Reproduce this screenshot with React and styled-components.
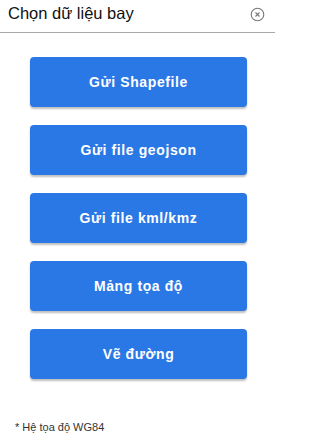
import React from 'react';
import styled, { createGlobalStyle } from 'styled-components';

const GlobalStyle = createGlobalStyle`
  html, body {
    margin: 0;
    padding: 0;
    background: #fff;
  }
  body {
    font-family: 'Liberation Sans', Arial, sans-serif;
  }
`;

const Panel = styled.div`
  width: 275px;
  height: 440px;
  display: flex;
  flex-direction: column;
  background: #fff;
  box-sizing: border-box;
`;

const Header = styled.header`
  height: 33px;
  display: flex;
  align-items: center;
  justify-content: space-between;
  padding: 0 10px 0 8px;
  border-bottom: 1px solid #a9a9a9;
  box-sizing: border-box;
`;

const Title = styled.h1`
  margin: -6px 0 0 0;
  font-size: 16.5px;
  font-weight: 400;
  color: #111;
`;

const CloseButton = styled.button`
  border: none;
  background: none;
  padding: 0;
  width: 15px;
  height: 15px;
  display: flex;
  margin-top: -4px;
  cursor: pointer;
`;

const ButtonList = styled.div`
  display: flex;
  flex-direction: column;
  gap: 18px;
  padding: 24px 28px 0 30px;
`;

const ActionButton = styled.button`
  height: 50px;
  border: none;
  border-radius: 4px;
  background: #2a78e6;
  color: #fff;
  font-family: 'Liberation Sans', Arial, sans-serif;
  font-size: 14px;
  font-weight: 700;
  letter-spacing: 0.6px;
  box-shadow: 0 2px 2px rgba(0, 0, 0, 0.25);
  cursor: pointer;
`;

const Note = styled.p`
  margin: auto 0 0 0;
  padding: 0 0 7px 15px;
  font-size: 11px;
  color: #333;
`;

const actions = ['Gửi Shapefile', 'Gửi file geojson', 'Gửi file kml/kmz', 'Mảng tọa độ', 'Vẽ đường'];

function App() {
  return (
    <Panel>
      <GlobalStyle />
      <Header>
        <Title>Chọn dữ liệu bay</Title>
        <CloseButton aria-label="close">
          <svg width="15" height="15" viewBox="0 0 15 15">
            <circle cx="7.5" cy="7.5" r="6.3" fill="none" stroke="#777" strokeWidth="1.1" />
            <path d="M5.5 5.5 L9.5 9.5 M9.5 5.5 L5.5 9.5" stroke="#777" strokeWidth="1.1" />
          </svg>
        </CloseButton>
      </Header>
      <ButtonList>
        {actions.map((label) => (
          <ActionButton key={label}>{label}</ActionButton>
        ))}
      </ButtonList>
      <Note>* Hệ tọa độ WG84</Note>
    </Panel>
  );
}

export default App;
